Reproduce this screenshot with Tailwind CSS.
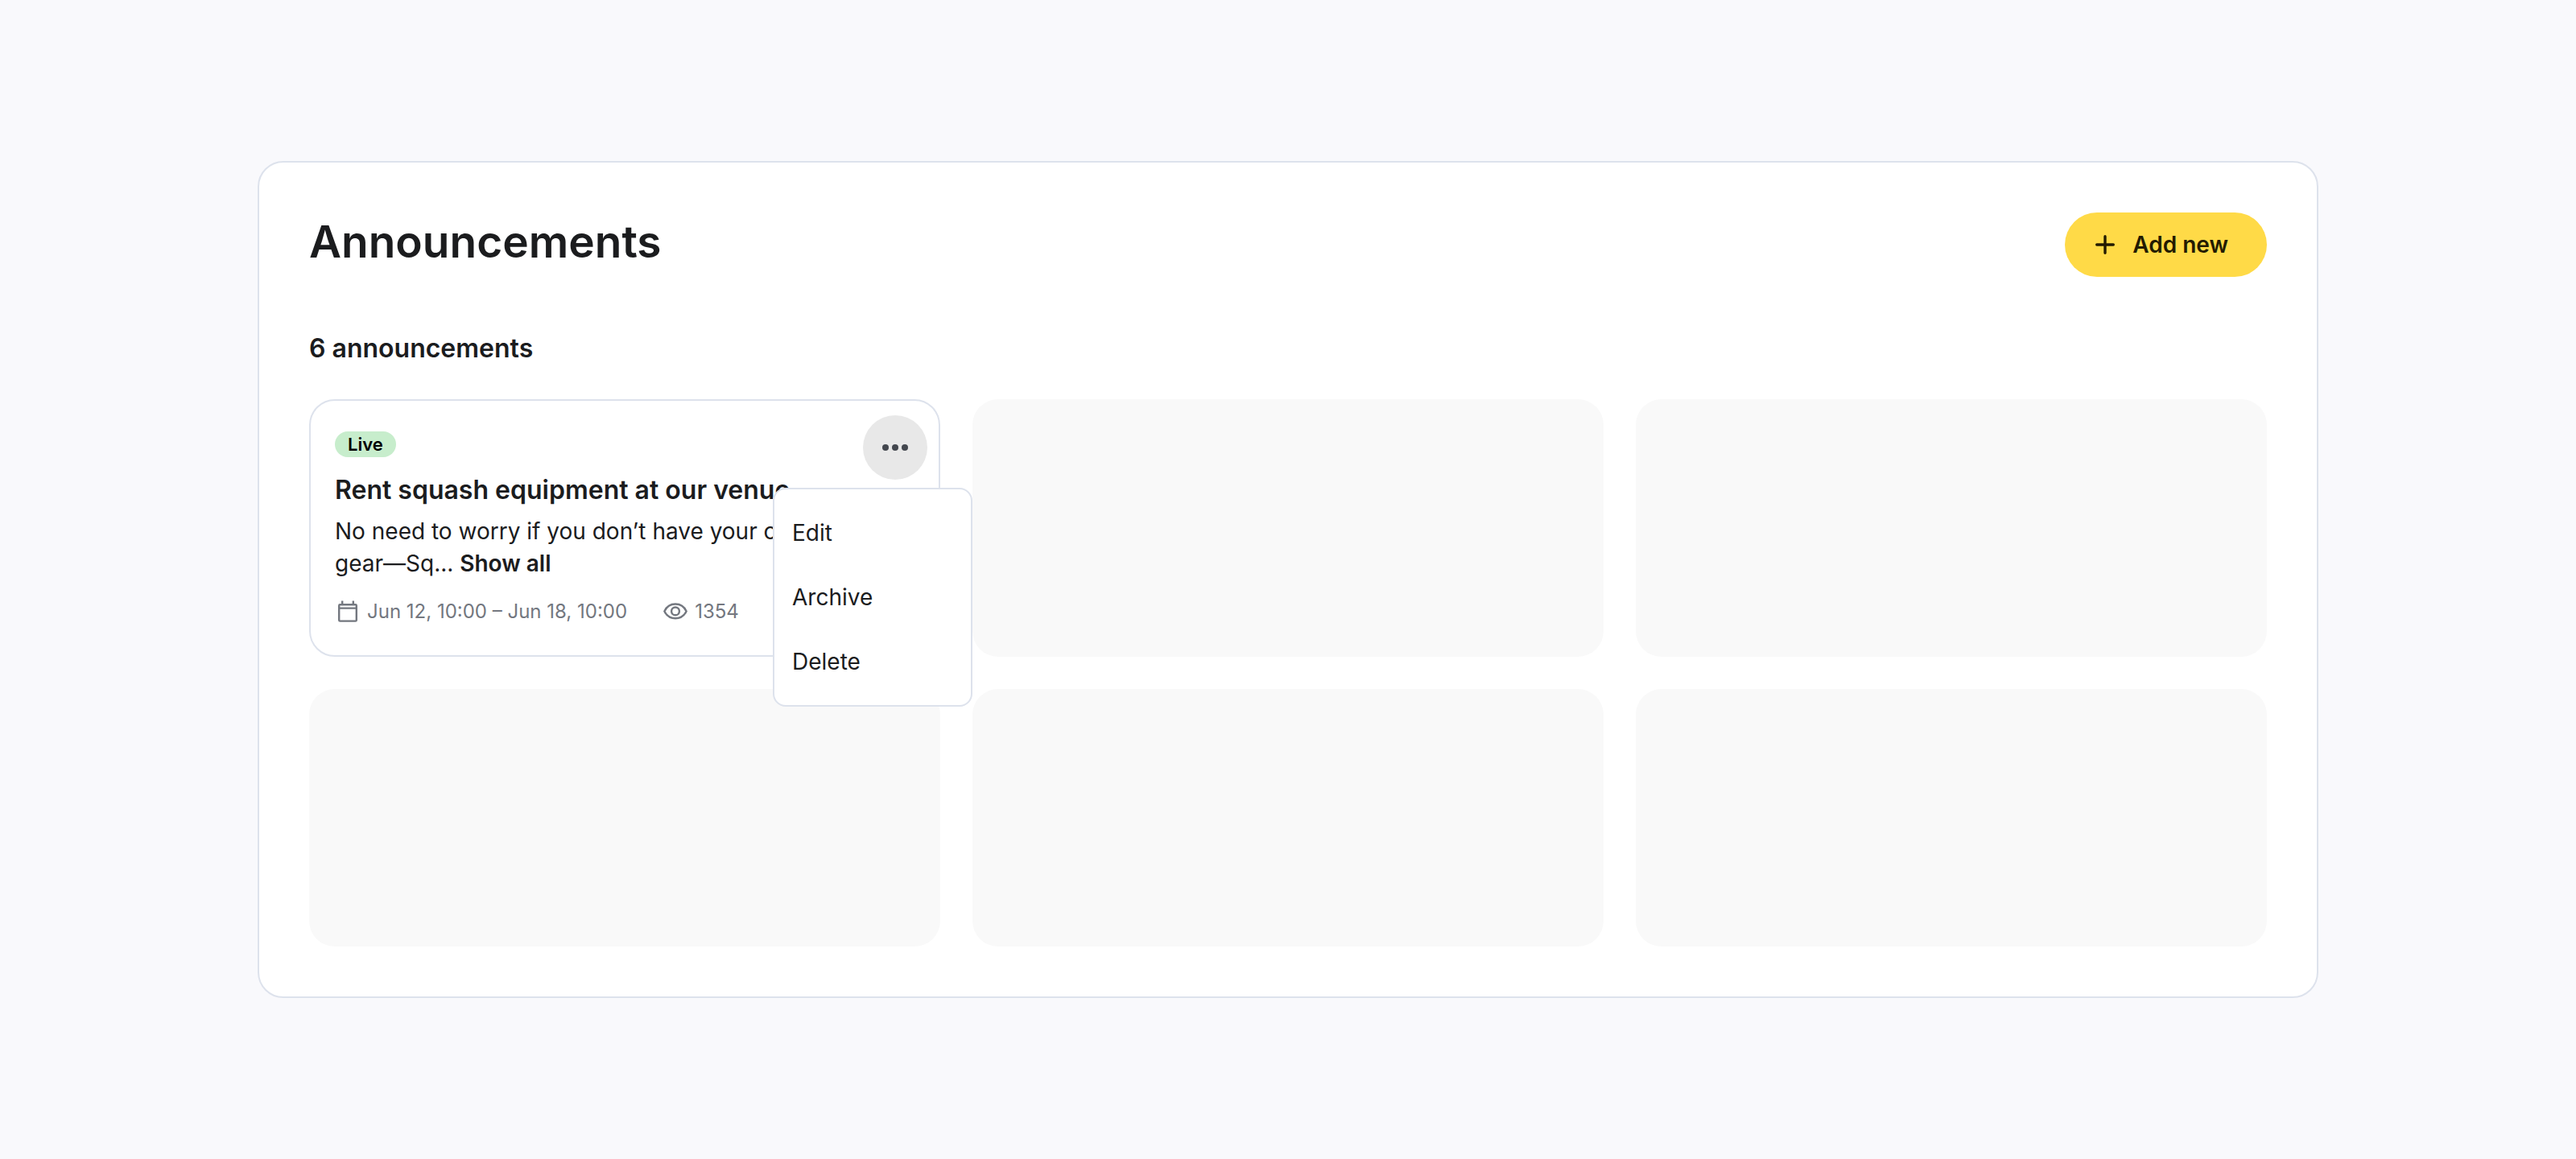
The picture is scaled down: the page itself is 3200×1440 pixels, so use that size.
<!DOCTYPE html>
<html lang="en">
<head>
  <meta charset="UTF-8">
  <meta name="viewport" content="width=device-width, initial-scale=1.0">
  <title>Announcements</title>
  <!-- Tailwind CSS -->
  <script src="https://cdn.jsdelivr.net/npm/@tailwindcss/browser@4"></script>
</head>
<body class="min-h-screen bg-[#f9f9fc] px-[10%] py-50 font-['Inter',sans-serif] text-[#1b1c1e]">

  <main class="bg-white border-2 border-[#dde2ec] rounded-[32px] p-[62px]">

    <!-- Header -->
    <header class="flex justify-between items-start">
      <h1 class="text-[55px] leading-18 font-semibold">Announcements</h1>
      <button type="button" class="flex items-center gap-[14px] h-20 pl-[30px] pr-12 rounded-full bg-[#ffda47] text-[#231b00] text-[28px] leading-10 font-semibold cursor-pointer hover:bg-[#f5cf3a]">
        <svg class="size-10" viewBox="0 0 40 40" fill="none" stroke="currentColor" stroke-width="3.4" stroke-linecap="round" aria-hidden="true">
          <path d="M20 9.700v20.600M9.700 20h20.600" />
        </svg>
        Add new
      </button>
    </header>

    <h2 class="mt-16 text-[32px] leading-[50px] font-semibold">6 announcements</h2>

    <!-- Cards -->
    <div class="mt-[38px] grid grid-cols-3 auto-rows-[320px] gap-10">

      <!-- Announcement card -->
      <article class="relative border-2 border-[#dde2ec] rounded-[32px] px-[30px] py-[38px]">
        <span class="flex items-center w-fit h-8 px-4 rounded-full bg-[#c7edcc] text-black text-[22px] leading-8 font-semibold">Live</span>
        <h3 class="mt-4 text-[32px] leading-[50px] font-semibold">Rent squash equipment at our venue</h3>
        <p class="mt-[6px] text-[28px] leading-10">
          No need to worry if you don’t have your own<br>
          gear—Sq... <a href="#" class="font-semibold">Show all</a>
        </p>
        <div class="mt-6 flex gap-11 text-2xl leading-8 text-[#73777f]">
          <div class="flex items-center gap-2">
            <svg class="size-8" viewBox="0 0 32 32" fill="none" stroke="currentColor" stroke-width="2.4" aria-hidden="true">
              <rect x="5.200" y="7.200" width="21.600" height="20.400" rx="1.200" />
              <path d="M5 11.600h22M9.200 2.500V7M22.800 2.500V7" />
            </svg>
            <span>Jun 12, 10:00 – Jun 18, 10:00</span>
          </div>
          <div class="flex items-center gap-2">
            <svg class="size-8" viewBox="0 0 32 32" fill="none" stroke="currentColor" stroke-width="2.4" aria-hidden="true">
              <path d="M2.400 15.400C5 9.800 10 6.500 16 6.500s11 3.300 13.600 8.900C27 21 22 24.200 16 24.200S5 21 2.400 15.400z" />
              <circle cx="16" cy="15.400" r="4.900" />
            </svg>
            <span>1354</span>
          </div>
        </div>

        <button type="button" aria-label="More actions" class="absolute top-[18px] right-[14px] flex items-center justify-center size-20 rounded-full bg-[#e8e8e8] text-[#43474e] cursor-pointer">
          <svg class="size-10" viewBox="0 0 40 40" fill="currentColor" aria-hidden="true">
            <circle cx="8" cy="20" r="4" />
            <circle cx="20" cy="20" r="4" />
            <circle cx="32" cy="20" r="4" />
          </svg>
        </button>

        <!-- Dropdown menu -->
        <div class="absolute z-10 top-[108px] -right-[42px] flex flex-col w-62 py-[14px] bg-white border-2 border-[#dde2ec] rounded-2xl text-[28px] leading-10">
          <button type="button" class="h-20 px-[22px] text-left cursor-pointer hover:bg-[#f9f9f9]">Edit</button>
          <button type="button" class="h-20 px-[22px] text-left cursor-pointer hover:bg-[#f9f9f9]">Archive</button>
          <button type="button" class="h-20 px-[22px] text-left cursor-pointer hover:bg-[#f9f9f9]">Delete</button>
        </div>
      </article>

      <!-- Placeholders -->
      <div class="rounded-[32px] bg-[#f9f9f9]"></div>
      <div class="rounded-[32px] bg-[#f9f9f9]"></div>
      <div class="rounded-[32px] bg-[#f9f9f9]"></div>
      <div class="rounded-[32px] bg-[#f9f9f9]"></div>
      <div class="rounded-[32px] bg-[#f9f9f9]"></div>
    </div>
  </main>

</body>
</html>
